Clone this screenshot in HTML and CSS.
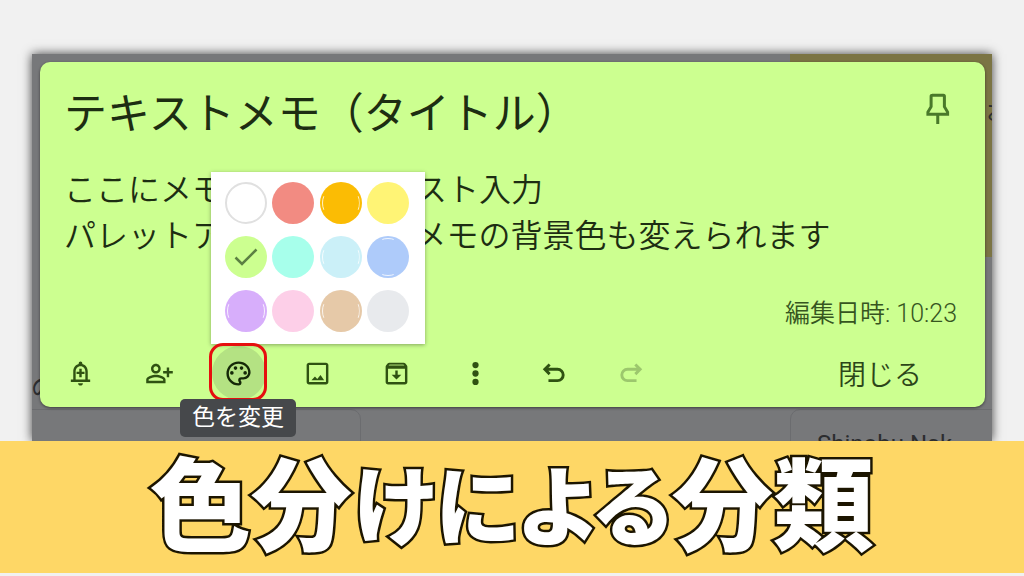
FILE: index.html
```html
<!DOCTYPE html>
<html lang="ja">
<head>
  <meta charset="UTF-8">
  <meta name="viewport" content="width=device-width,initial-scale=1">
  <title>色分けによる分類</title>
  <link rel="stylesheet" href="styles.css">
</head>
<body>

  <main class="stage">
    <!-- dimmed note list behind the open note -->
    <div class="backdrop" aria-hidden="true">
      <div class="tile tile-left"><span>の</span></div>
      <div class="tile tile-yellow"><span>お</span></div>
      <div class="tile tile-outline"></div>
      <div class="tile tile-name"><span>Shinobu Nak</span></div>
    </div>

    <article class="note">
      <header class="note-head">
        <h2>テキストメモ（タイトル）</h2>
        <button class="icon-btn pin" aria-label="メモを固定">
          <svg viewBox="0 0 24 32"><path d="M6 2.2h11.400q1 0 1 1v10.500l3.200 5.400v2.200H1.900v-2.200l3.200-5.400V3.200q0-1 1-1zM11.750 21.500V31"/></svg>
        </button>
      </header>

      <p class="note-body">ここにメモの内容をテキスト入力<br>パレットアイコンから、メモの背景色も変えられます</p>

      <p class="edited">編集日時: 10:23</p>

      <footer class="toolbar">
        <div class="tool">
          <button class="icon-btn" aria-label="通知">
            <svg viewBox="0 0 24 24"><path d="M18 17v-6.500c0-3.070-1.630-5.640-4.500-6.320V3.500a1.500 1.500 0 0 0-3 0v.680C7.640 4.860 6 7.420 6 10.500V17H4v2h16v-2zm-2 0H8v-6.500C8 8 9.500 6 12 6s4 2 4 4.500zm-4 5c1.100 0 2-.900 2-2h-4c0 1.100.900 2 2 2zM11 8v2.500H8.700v2H11V15h2v-2.500h2.300v-2H13V8z"/></svg>
          </button>
        </div>
        <div class="tool">
          <button class="icon-btn" aria-label="共同編集者">
            <svg viewBox="0 0 24 24"><path d="M9 12c2.210 0 4-1.790 4-4s-1.790-4-4-4-4 1.790-4 4 1.790 4 4 4zm0-6c1.100 0 2 .900 2 2s-.900 2-2 2-2-.900-2-2 .900-2 2-2zm0 7c-2.670 0-8 1.340-8 4v3h16v-3c0-2.660-5.330-4-8-4zm6 5H3v-1c.200-.710 3.300-2 6-2s5.800 1.290 6 2zm5-8V7h-2v3h-3v2h3v3h2v-3h3v-2z"/></svg>
          </button>
        </div>
        <div class="tool">
          <button class="icon-btn active" aria-label="色を変更" aria-describedby="tip">
            <svg viewBox="0 0 24 24"><path d="M12 22C6.490 22 2 17.510 2 12S6.490 2 12 2s10 4.040 10 9c0 3.310-2.690 6-6 6h-1.770c-.280 0-.500.220-.500.500 0 .120.050.230.130.330.410.470.640 1.060.640 1.670A2.500 2.500 0 0 1 12 22zm0-18c-4.410 0-8 3.590-8 8s3.590 8 8 8c.280 0 .500-.220.500-.500a.540.540 0 0 0-.140-.350c-.410-.460-.630-1.050-.630-1.650a2.500 2.500 0 0 1 2.500-2.500H16c2.210 0 4-1.790 4-4 0-3.860-3.590-7-8-7z"/><circle cx="6.500" cy="11.500" r="1.500"/><circle cx="9.500" cy="7.500" r="1.500"/><circle cx="14.500" cy="7.500" r="1.500"/><circle cx="17.500" cy="11.500" r="1.500"/></svg>
          </button>
          <div class="palette" role="group" aria-label="背景色">
            <button class="swatch white" aria-label="デフォルト"></button>
            <button class="swatch red" aria-label="赤"></button>
            <button class="swatch orange sides" aria-label="オレンジ"></button>
            <button class="swatch yellow" aria-label="黄"></button>
            <button class="swatch green" aria-label="緑" aria-pressed="true">
              <svg viewBox="0 0 24 18"><path d="M1.500 9.500l6.500 6.500L22.500 1.500"/></svg>
            </button>
            <button class="swatch teal" aria-label="青緑"></button>
            <button class="swatch blue sides" aria-label="青"></button>
            <button class="swatch navy ends" aria-label="紺"></button>
            <button class="swatch purple sides" aria-label="紫"></button>
            <button class="swatch pink" aria-label="ピンク"></button>
            <button class="swatch brown sides" aria-label="茶"></button>
            <button class="swatch gray" aria-label="灰"></button>
          </div>
          <span class="marker"></span>
          <span class="tooltip" id="tip" role="tooltip">色を変更</span>
        </div>
        <div class="tool">
          <button class="icon-btn" aria-label="画像を追加">
            <svg viewBox="0 0 24 24"><path d="M19 5v14H5V5zm0-2H5c-1.100 0-2 .900-2 2v14c0 1.100.900 2 2 2h14c1.100 0 2-.900 2-2V5c0-1.100-.900-2-2-2zm-4.500 10.300l-2.700 3.300-1.900-2.200L7 17.500h10.500z"/></svg>
          </button>
        </div>
        <div class="tool">
          <button class="icon-btn" aria-label="アーカイブ">
            <svg viewBox="0 0 24 24"><path opacity=".4" d="M5 4.500h14V7H5z"/><path d="M20.540 5.230l-1.390-1.680C18.880 3.210 18.470 3 18 3H6c-.470 0-.880.210-1.160.550L3.460 5.230C3.170 5.570 3 6.020 3 6.500V19c0 1.100.900 2 2 2h14c1.100 0 2-.900 2-2V6.500c0-.480-.170-.930-.460-1.270zM6.240 4.600h11.520l.830 1H5.420zM5 19V8h14v11zm6-9.500V13H8l4 4 4-4h-3V9.500z"/></svg>
          </button>
        </div>
        <div class="tool">
          <button class="icon-btn" aria-label="その他">
            <svg viewBox="0 0 24 24"><circle cx="12" cy="5" r="2.600"/><circle cx="12" cy="12" r="2.600"/><circle cx="12" cy="19" r="2.600"/></svg>
          </button>
        </div>
        <div class="tool">
          <button class="icon-btn line" aria-label="元に戻す">
            <svg viewBox="0 0 24 24"><path d="M8 4.500L4 8.500l4 4M4.500 8.500H14.500a4.700 4.700 0 0 1 0 9.400H7"/></svg>
          </button>
        </div>
        <div class="tool narrow">
          <button class="icon-btn line" aria-label="やり直す" disabled>
            <svg viewBox="0 0 24 24"><path d="M16 4.500l4 4-4 4M19.500 8.500H9.500a4.700 4.700 0 0 0 0 9.400H17"/></svg>
          </button>
        </div>
        <button class="close">閉じる</button>
      </footer>
    </article>
  </main>

  <div class="banner">
    <h1>色分<span class="kana">けによる</span>分類</h1>
  </div>

</body>
</html>
```
FILE: styles.css
```css
* { box-sizing: border-box; }
body {
  margin: 0; background: #f1f1f1; color: #1d2d12;
  font-family: Roboto, "Noto Sans CJK JP", sans-serif;
  min-height: 100vh; overflow-x: hidden;
}
h1, h2, p { margin: 0; }
button { border: 0; padding: 0; background: none; color: inherit; font: inherit; cursor: pointer; }
svg { display: block; fill: currentColor; }

.stage {
  position: relative;
  margin: 54px 32px 0;
  padding: 8px 7px 34px 8px;
  background: #77787a;
  box-shadow: 0 0 10px rgba(0, 0, 0, .75);
}

/* notes behind the dialog */
.backdrop { position: absolute; inset: 0; overflow: hidden; color: #2c2d2f; font-size: 24px; }
.tile { position: absolute; }
.tile-left { left: -1px; top: 314px; }
.tile-yellow { right: 0; top: 0; width: 202px; height: 203px; background: #7b7444; }
.tile-yellow span { position: absolute; right: -18px; top: 38px; }
.tile-outline { left: -20px; top: 355px; width: 349px; height: 80px; border: 1px solid #6b6c6f; border-radius: 10px; }
.tile-name { right: -20px; top: 355px; width: 222px; height: 80px; padding: 20px 26px; border: 1px solid #6b6c6f; border-radius: 10px; line-height: 28px; white-space: nowrap; }

.note {
  position: relative;
  background: #ccff90;
  border-radius: 10px;
  box-shadow: 0 1px 3px rgba(0, 0, 0, .5);
}
.note-head { display: flex; justify-content: space-between; padding: 20px 29px 0 24px; }
.note-head h2 { font-size: 43px; line-height: 64px; font-weight: 400; }
.note-body { padding: 21px 24px 0; font-size: 32px; line-height: 46px; font-weight: 350; }
.edited { padding: 40px 28px 0; font-size: 25px; line-height: 30px; font-weight: 350; text-align: right; color: #36551f; }

.icon-btn { display: flex; align-items: center; justify-content: center; width: 54px; height: 54px; border-radius: 50%; color: #2f5212; }
.icon-btn svg { width: 29px; height: 29px; }
.icon-btn.active { background: #b4e283; color: #152808; }
.icon-btn.line svg { fill: none; stroke: currentColor; stroke-width: 2.4; }
.icon-btn:disabled { color: #9cc76d; }
.icon-btn.pin { width: 36px; color: #49792a; }
.icon-btn.pin svg { width: 24px; height: 32px; fill: none; stroke: currentColor; stroke-width: 3; }

.toolbar { display: flex; align-items: center; padding: 17px 0 7px 1px; }
.tool { position: relative; display: flex; justify-content: center; flex: 0 0 79px; }
.tool.narrow { flex-basis: 73px; }
.close { margin: 0 63px 0 auto; padding-top: 6px; font-size: 28px; line-height: 40px; font-weight: 350; color: #2c4619; }

.palette {
  position: absolute; left: 12px; bottom: 56px;
  display: grid; grid-template-columns: repeat(4, 42px);
  justify-content: space-between; row-gap: 12px;
  width: 214px; padding: 10px 16px 12px 14px;
  background: #fff;
  box-shadow: 0 1px 4px rgba(0, 0, 0, .35);
}
.swatch { position: relative; display: flex; align-items: center; justify-content: center; width: 42px; height: 42px; border-radius: 50%; }
.swatch svg { width: 24px; height: 18px; fill: none; stroke: #5c8043; stroke-width: 2.5; }
.white { border: 2px solid #e0e0e0; }
.red { background: #f28b82; }
.orange { background: #fbbc04; }
.yellow { background: #fff475; }
.green { background: #ccff90; }
.teal { background: #a7ffeb; }
.blue { background: #cbf0f8; }
.navy { background: #aecbfa; }
.purple { background: #d7aefb; }
.pink { background: #fdcfe8; }
.brown { background: #e6c9a8; }
.gray { background: #e8eaed; }
/* thin light arcs inside the rim */
.sides::after, .ends::after {
  content: ""; position: absolute; inset: 2px;
  border: 1px solid rgba(255, 255, 255, .8); border-radius: 50%;
}
.sides::after { clip-path: inset(32% 0); }
.ends::after { clip-path: inset(0 35%); }

/* red frame round the palette button */
.marker {
  position: absolute; left: 10px; top: -3px;
  width: 58px; height: 58px;
  border: 3px solid #e60f0f; border-radius: 14px;
  pointer-events: none;
}
.tooltip {
  position: absolute; left: -19px; top: 53px;
  padding: 0 12px; border-radius: 5px;
  background: #46484b; color: #fff;
  font-size: 23px; line-height: 38px; white-space: nowrap;
}

.banner {
  position: relative;
  height: 132px;
  background: #fed766;
  text-align: center;
  overflow: hidden;
}
.banner h1 {
  font-family: "Noto Sans CJK JP", sans-serif;
  font-size: 101px; line-height: 116px; font-weight: 900;
  font-feature-settings: "palt";
  color: #fff; white-space: nowrap;
  -webkit-text-stroke: 5px #1c1500;
  paint-order: stroke fill;
}
.banner .kana { font-size: 86px; line-height: 80px; vertical-align: 4px; }
```
